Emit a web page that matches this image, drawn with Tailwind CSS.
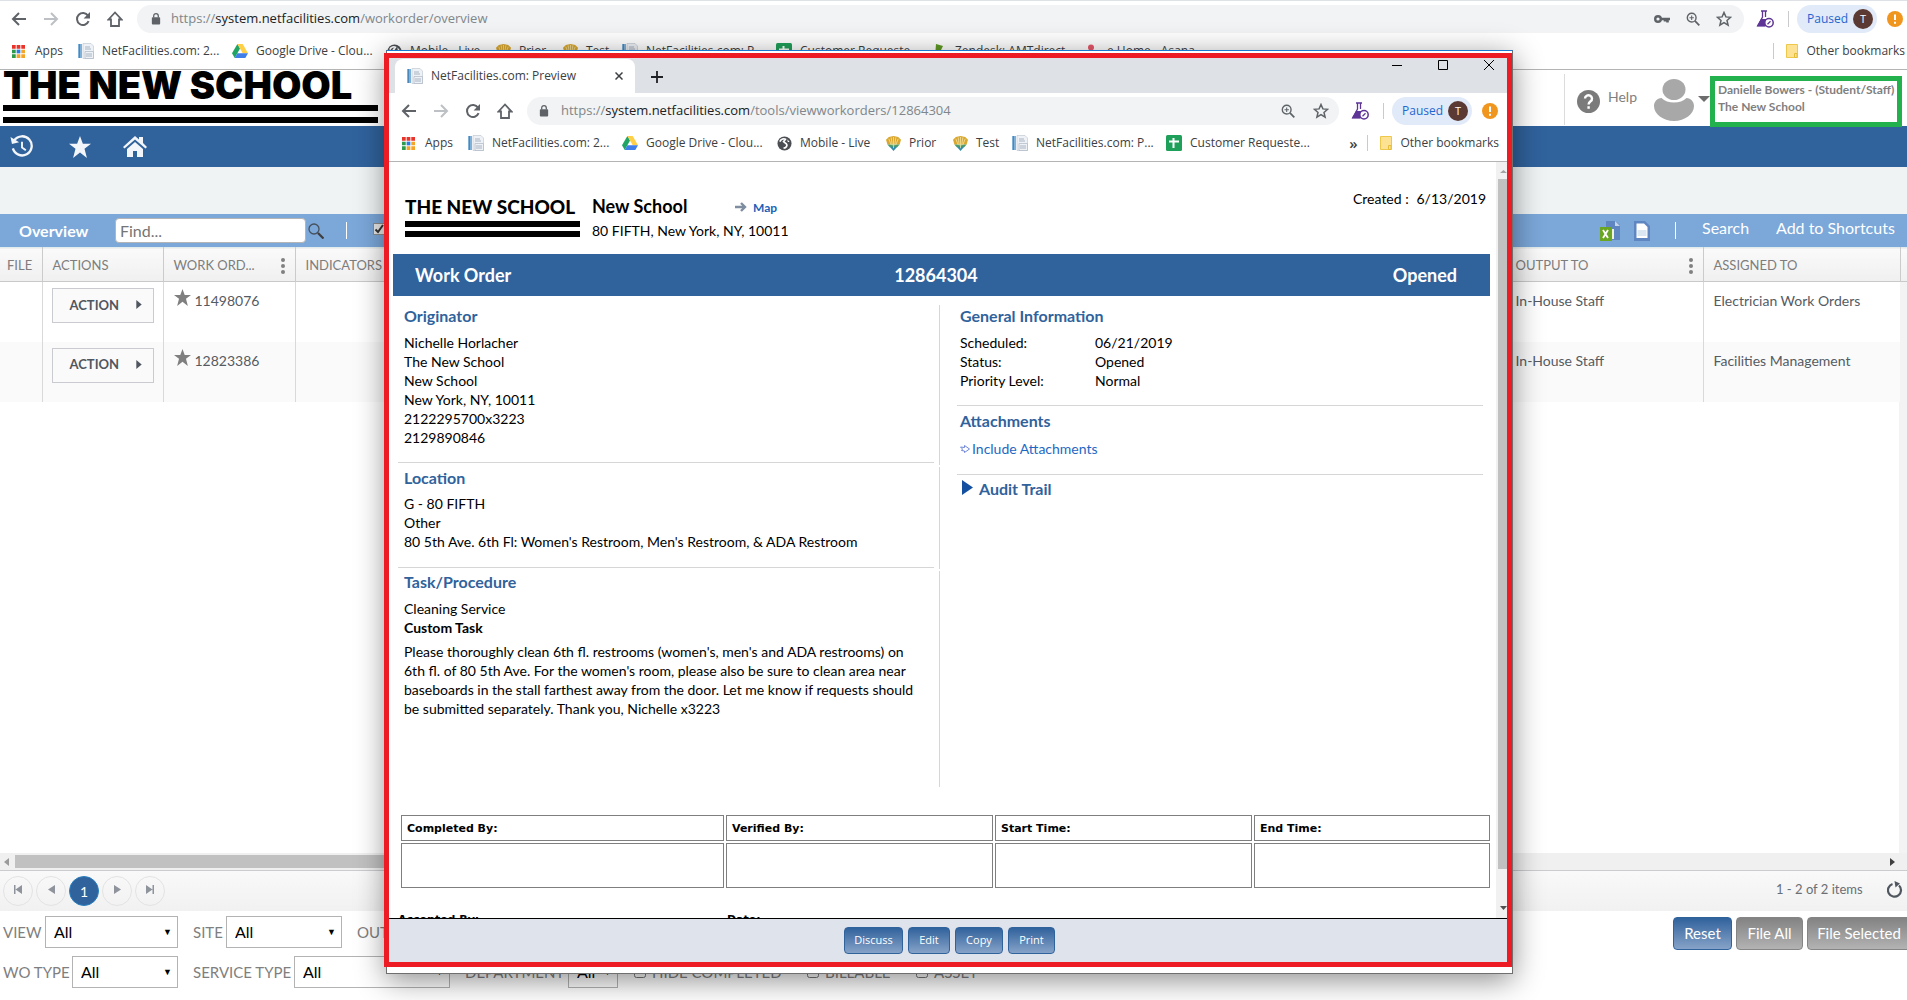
<!DOCTYPE html>
<html lang="en">
<head>
<meta charset="utf-8">
<title>NetFacilities.com: Work Order Overview</title>
<script src="https://cdn.jsdelivr.net/npm/@tailwindcss/browser@4"></script>
</head>
<body class="relative flex min-h-screen flex-col overflow-hidden bg-white font-['Lato',sans-serif] text-[14px] text-[#555b63]">

<!-- shared icon sprites -->
<svg class="hidden" aria-hidden="true">
  <symbol id="back" viewBox="0 0 16 16"><path d="M15 8H2M8 2L2 8l6 6" fill="none" stroke="currentColor" stroke-width="2"/></symbol>
  <symbol id="fwd" viewBox="0 0 16 16"><path d="M1 8h13M8 2l6 6-6 6" fill="none" stroke="currentColor" stroke-width="2"/></symbol>
  <symbol id="reload" viewBox="0 0 16 16"><path d="M13.600 10.200A6 6 0 1 1 13 4.600" fill="none" stroke="currentColor" stroke-width="2"/><path d="M15 1v6.400H8.600z" fill="currentColor"/></symbol>
  <symbol id="home" viewBox="0 0 16 16"><path d="M1.500 8.500L8 1.500l6.500 7H12V15H4V8.500z" fill="none" stroke="currentColor" stroke-width="1.800"/></symbol>
  <symbol id="lock" viewBox="0 0 10 13"><rect x="0.500" y="4.500" width="9" height="8" rx="1" fill="currentColor"/><path d="M2.500 5V3.200a2.500 2.500 0 0 1 5 0V5" fill="none" stroke="currentColor" stroke-width="1.400"/></symbol>
  <symbol id="apps" viewBox="0 0 14 14"><g fill="#e8352c"><path d="M0 0h4v4H0zM5 0h4v4H5zM10 0h4v4h-4z"/></g><path d="M0 5h4v4H0zM0 10h4v4H0z" fill="#2d9a4c"/><path d="M5 5h4v4H5z" fill="#2c7be5"/><path d="M10 5h4v4h-4zM5 10h4v4H5zM10 10h4v4h-4z" fill="#f3a52a"/></symbol>
  <symbol id="net" viewBox="0 0 16 16"><path d="M0 1h4v14H0z" fill="#7fb0d8"/><path d="M1 1h1v14H1z" fill="#4a87bb"/><path d="M5 .5h8l2.500 2.500V15.500H5z" fill="#eef1f5" stroke="#c3cad3" stroke-width=".7"/><path d="M7 4h5M7 6h6M8 11h6M8 13h6" stroke="#a9b4c2"/><path d="M7 8.500h8.500v7H7z" fill="none" stroke="#b5bfca" stroke-width=".8"/></symbol>
  <symbol id="drive" viewBox="0 0 16 14"><path d="M5.400 0L0 9.300 2.700 14 8 4.600z" fill="#1fa463"/><path d="M5.400 0h5.300L16 9.300h-5.300z" fill="#ffcf48"/><path d="M2.700 14l2.700-4.700H16L13.300 14z" fill="#3f7ee8"/></symbol>
  <symbol id="globe" viewBox="0 0 16 16"><circle cx="8" cy="8" r="7.500" fill="#4b4f54"/><path d="M3 6c1.500-3 4.500-3.500 6-2.500L7 6l3 2.500c1.500 1.500 0 4-3 4.500" stroke="#fff" stroke-width="1.800" fill="none"/><path d="M11 3.500l2.500 3h-2z" fill="#fff"/></symbol>
  <symbol id="crest" viewBox="0 0 16 16"><path d="M0 4l3-3 5-1 5 1 3 3-1.500 5h-13z" fill="#d9a72f"/><path d="M1.500 9h13L12 12H4z" fill="#4e9b6a"/><path d="M4 11.500h8L8 16z" fill="#2f8cab"/><path d="M3 3l2.500 6.500M8 1v12M13 3l-2.500 6.500M5.500 1.500L6.700 10M10.500 1.500L9.300 10" stroke="#f6e6a5" stroke-width=".8"/></symbol>
  <symbol id="sheets" viewBox="0 0 16 16"><rect width="16" height="16" rx="1.500" fill="#1fa05a"/><path d="M3 6.500h10M7.500 3v10" stroke="#fff" stroke-width="2"/></symbol>
  <symbol id="zen" viewBox="0 0 16 16"><path d="M5 1l7 2-2 4 2 7H4z" fill="#5f9b22"/></symbol>
  <symbol id="pin" viewBox="0 0 16 16"><circle cx="8" cy="4.500" r="3" fill="#e8596b"/><circle cx="3.500" cy="12" r="3" fill="#e8596b"/><circle cx="12.500" cy="12" r="3" fill="#e8596b"/></symbol>
  <symbol id="folder" viewBox="0 0 12 14"><path d="M.5.5h11v13H.5z" fill="#fde293" stroke="#edc84a"/><path d="M8.500 9.500h2.500v4h-2.500z" fill="#fde293" stroke="#e6bd38"/></symbol>
  <symbol id="zoom" viewBox="0 0 16 16"><circle cx="6.500" cy="6.500" r="5" fill="none" stroke="currentColor" stroke-width="1.600"/><path d="M10.200 10.200l5 5" stroke="currentColor" stroke-width="2"/><path d="M4 6.500h5M6.500 4v5" stroke="currentColor" stroke-width="1.200"/></symbol>
  <symbol id="ostar" viewBox="0 0 16 16"><path d="M8 1.500l1.900 4.400 4.700.4-3.600 3.100 1.100 4.700L8 11.600l-4.100 2.500L5 9.400 1.400 6.300l4.700-.4z" fill="none" stroke="currentColor" stroke-width="1.500"/></symbol>
  <symbol id="star" viewBox="0 0 20 20"><path d="M10 0l2.600 7H20l-5.900 4.500L16.300 20 10 14.900 3.700 20l2.200-8.500L0 7h7.400z" fill="currentColor"/></symbol>
  <symbol id="key" viewBox="0 0 16 10"><circle cx="4" cy="5" r="2.800" fill="none" stroke="currentColor" stroke-width="2.400"/><path d="M7 5h9M13.500 5v3.500M11 5v2.500" stroke="currentColor" stroke-width="2.600"/></symbol>
  <symbol id="flask" viewBox="0 0 18 18"><path d="M5 1h6M6.500 1v6L2 15.500h8M9.500 1v6" fill="none" stroke="#5e3596" stroke-width="1.300"/><path d="M5 9h5L9 16.500H.5z" fill="#5e3596"/><circle cx="13" cy="12.800" r="4.200" fill="#fff" stroke="#5e3596" stroke-width="1.500"/><path d="M11.500 14.300l3-3" stroke="#5e3596" stroke-width="1.300"/></symbol>
  <symbol id="alert" viewBox="0 0 16 16"><circle cx="8" cy="8" r="8" fill="#f0961e"/><path d="M8 3.500v5.500M8 10.700v2" stroke="#fff" stroke-width="2"/></symbol>
  <symbol id="play" viewBox="0 0 8 10"><path d="M1 0l6 5-6 5z" fill="currentColor"/></symbol>
</svg>

<!-- browser toolbar -->
<header class="flex h-[70px] shrink-0 flex-col border-t border-b border-t-[#dee1e6] border-b-[#b4b4b4] font-['Open_Sans',sans-serif] text-[12px] text-[#3c4043]">
  <div class="flex h-9 items-center pl-[11px] pr-1 text-[#5f6368]">
    <button class="mr-4 size-4" aria-label="Back"><svg class="size-4"><use href="#back"/></svg></button>
    <button class="mr-4 size-4 text-[#bdc0c4]" aria-label="Forward"><svg class="size-4"><use href="#fwd"/></svg></button>
    <button class="mr-4 size-4" aria-label="Reload"><svg class="size-4"><use href="#reload"/></svg></button>
    <button class="mr-3.5 size-4" aria-label="Home"><svg class="size-4"><use href="#home"/></svg></button>
    <div class="flex h-7 flex-1 items-center rounded-full bg-[#f1f3f4] pl-3.5 pr-3">
      <svg class="mr-2.5 h-3 w-2.5"><use href="#lock"/></svg>
      <span class="flex-1 text-[13px] text-[#80868b]">https://<span class="text-[#202124]">system.netfacilities.com</span>/workorder/overview</span>
      <svg class="mr-4 h-2.5 w-4"><use href="#key"/></svg>
      <svg class="mr-4 size-3.5"><use href="#zoom"/></svg>
      <svg class="size-4"><use href="#ostar"/></svg>
    </div>
    <svg class="ml-3 mr-3.5 size-[18px]"><use href="#flask"/></svg>
    <span class="mr-2 h-4 w-px bg-[#c8cacd]"></span>
    <button class="mr-2.5 flex h-7 items-center gap-2 rounded-full bg-[#e1eaf8] pl-2.5 pr-1 text-[#1f66d0]"><span class="w-[38px] text-left">Paused</span><span class="flex size-5 items-center justify-center rounded-full bg-[#5a3a32] text-[11px] text-white">T</span></button>
    <svg class="size-4"><use href="#alert"/></svg>
  </div>
  <nav class="flex h-7 items-center pl-3 pr-0.5 whitespace-nowrap" aria-label="Bookmarks">
    <a href="#" class="flex w-[66px] items-center gap-2.5"><svg class="size-[13px]"><use href="#apps"/></svg>Apps</a>
    <a href="#" class="flex w-[154px] items-center gap-2"><svg class="size-4"><use href="#net"/></svg>NetFacilities.com: 2...</a>
    <a href="#" class="flex w-[155px] items-center gap-2"><svg class="h-3.5 w-4"><use href="#drive"/></svg>Google Drive - Clou...</a>
    <a href="#" class="flex w-[109px] items-center gap-2"><svg class="size-[15px]"><use href="#globe"/></svg>Mobile - Live</a>
    <a href="#" class="flex w-[67px] items-center gap-2"><svg class="size-[15px]"><use href="#crest"/></svg>Prior</a>
    <a href="#" class="flex w-[59px] items-center gap-2"><svg class="size-[15px]"><use href="#crest"/></svg>Test</a>
    <a href="#" class="flex w-[154px] items-center gap-2"><svg class="size-4"><use href="#net"/></svg>NetFacilities.com: P...</a>
    <a href="#" class="flex w-[155px] items-center gap-2"><svg class="size-4"><use href="#sheets"/></svg>Customer Requeste...</a>
    <a href="#" class="flex w-[152px] items-center gap-2"><svg class="size-4"><use href="#zen"/></svg>Zendesk: AMTdirect</a>
    <a href="#" class="flex flex-1 items-center gap-2"><svg class="size-4"><use href="#pin"/></svg>e Home - Asana</a>
    <span class="mr-3 h-4 w-px bg-[#c8cacd]"></span>
    <a href="#" class="flex items-center gap-2"><svg class="h-3.5 w-3"><use href="#folder"/></svg>Other bookmarks</a>
  </nav>
</header>

<!-- brand + account -->
<div class="flex h-14 shrink-0 justify-between">
  <div class="ml-[3px] w-[375px] whitespace-nowrap text-black">
    <div class="h-[33px] font-['Inter',sans-serif] text-[38px] leading-[31px] font-black">THE NEW SCHOOL</div>
    <div class="mt-0.5 h-1.5 bg-black"></div>
    <div class="mt-1.5 h-1.5 bg-black"></div>
  </div>
  <div class="flex items-start pr-[5px] pt-1.5">
    <div class="-mt-0.5 mr-3 h-[51px] w-px bg-[#dcdcdc]"></div>
    <svg class="mt-3.5 mr-2 size-[23px]" viewBox="0 0 23 23"><circle cx="11.500" cy="11.500" r="11.500" fill="#7b7b7b"/><path d="M8 8.500a3.500 3.300 0 1 1 5.600 2.700c-1.300 1-2 1.500-2 3.300M11.600 16.200v2.500" fill="none" stroke="#fff" stroke-width="2.400"/></svg>
    <a href="#" class="mt-[11px] w-[46px] text-[14px] leading-5 text-[#808080]">Help</a>
    <svg class="mt-[3px] mr-1 h-[42px] w-10" viewBox="0 0 40 42"><ellipse cx="20" cy="10.500" rx="11.500" ry="10.500" fill="#a8a8a8"/><path d="M0 27c0-4 3-8 7.500-8 3 3 7.500 4.500 12.500 4.500s9.500-1.500 12.500-4.500C37 19 40 23 40 27c0 8-9 15-20 15S0 35 0 27z" fill="#a8a8a8"/></svg>
    <svg class="mt-5 h-1.5 w-3" viewBox="0 0 12 6"><path d="M0 0h12L6 6z" fill="#6d6d6d"/></svg>
    <div class="z-10 h-[51px] w-48 border-5 border-[#22b14c] pl-[3px] text-[12px] leading-[17px] font-bold whitespace-nowrap text-[#7f7f7f]">Danielle Bowers - (Student/Staff)<br>The New School</div>
  </div>
</div>

<nav class="flex h-[41px] shrink-0 items-center bg-[#30629c] pl-2.5 text-[#f2f5f9]" aria-label="Main">
  <a href="#" aria-label="History" class="mr-[35px]"><svg class="h-[23px] w-6" viewBox="0 0 24 24"><path d="M4 5.500A10 10 0 1 1 2.500 14" fill="none" stroke="currentColor" stroke-width="2.400"/><path d="M0 2l1.500 7.500L9 7.500z" fill="currentColor"/><path d="M12 7v6l4 3" fill="none" stroke="currentColor" stroke-width="2"/></svg></a>
  <a href="#" aria-label="Favorites" class="mr-8"><svg class="size-[22px]"><use href="#star"/></svg></a>
  <a href="#" aria-label="Home"><svg class="h-[21px] w-6" viewBox="0 0 24 21"><path d="M0 11L12 0l4 3.500V1h4v6l4 4-1.500 1.500L12 3.500 1.500 12.500z" fill="currentColor"/><path d="M12 6l8 7v8h-6v-6h-4v6H4v-8z" fill="currentColor"/></svg></a>
</nav>
<div class="h-[47px] shrink-0 bg-[#eff3f4]"></div>

<!-- overview bar -->
<div class="flex h-[33px] shrink-0 items-center bg-[#7ba7d9] pl-[19px] pr-3 text-[16px] text-white">
  <h1 class="w-24 font-bold">Overview</h1>
  <input type="text" aria-label="Find" placeholder="Find..." class="h-[25px] w-[191px] rounded border border-[#b5b5b5] bg-white px-1 text-[16px] placeholder:text-[#757575]">
  <svg class="mr-[22px] ml-0.5 size-4" viewBox="0 0 16 16"><circle cx="6" cy="6" r="5" fill="none" stroke="#47515d" stroke-width="1.300"/><path d="M10 10l5.500 5.500" stroke="#3e3e3e" stroke-width="2.200"/></svg>
  <span class="mr-[26px] h-[17px] w-px bg-white"></span>
  <span class="relative mb-1 flex size-3"><input type="checkbox" checked aria-label="Show all" class="size-3 appearance-none border border-[#8c8c8c] bg-[#e8e8e8]"><svg class="pointer-events-none absolute inset-0 size-3" viewBox="0 0 12 12"><path d="M2.500 6.500L5 9l5-7" fill="none" stroke="#333" stroke-width="2"/></svg></span>
  <div class="ml-auto flex items-center">
    <svg class="mr-3 h-5 w-[22px]" viewBox="0 0 22 20"><path d="M6 0h9l5 4v15H6z" fill="#5f86c0"/><path d="M15 0l5 5h-5z" fill="#c3d4ec"/><path d="M0 6h12v14H0z" fill="#6aa524"/><path d="M3 9l5 8M8 9l-5 8" stroke="#fff" stroke-width="1.800"/><path d="M12 8h2v10h-2z" fill="#eef3d9"/></svg>
    <svg class="mr-[25px] h-5 w-4" viewBox="0 0 16 20"><path d="M0 0h11l5 5v15H0z" fill="#5f86c0"/><path d="M2.500 2.500H10l3.500 3.500v11h-11z" fill="#fff"/><path d="M3.500 9h9v6h-9z" fill="#dbe6f3"/></svg>
    <span class="mr-[26px] h-[17px] w-px bg-white"></span>
    <a href="#" class="mb-1.5 w-[74px]">Search</a>
    <a href="#" class="mb-1.5 w-[119px] whitespace-nowrap">Add to Shortcuts</a>
  </div>
</div>

<!-- work order grid -->
<div class="flex min-h-0 flex-1 flex-col">
  <table class="w-full table-fixed border-collapse text-left">
    <colgroup><col class="w-[42px]"><col class="w-[121px]"><col class="w-[132px]"><col><col class="w-[198px]"><col class="w-[197px]"><col class="w-[7px]"></colgroup>
    <thead>
      <tr class="h-[34px] border-t border-b border-t-[#e3ecec] border-b-[#c9c9c9] bg-linear-to-b from-[#fafafa] to-[#f0f0f0] text-[13px] text-[#7d7d7d]">
        <th class="border-r border-[#cbcbcb] pt-[3px] pl-[7px] font-normal">FILE</th>
        <th class="border-r border-[#cbcbcb] pt-[3px] pl-2.5 font-normal">ACTIONS</th>
        <th class="border-r border-[#cbcbcb] pt-[3px] pl-2.5 font-normal"><div class="flex items-center justify-between pr-2.5"><span>WORK ORD...</span><svg class="h-4 w-1" viewBox="0 0 4 16"><g fill="#808080"><circle cx="2" cy="2" r="2"/><circle cx="2" cy="8" r="2"/><circle cx="2" cy="14" r="2"/></g></svg></div></th>
        <th class="border-r border-[#cbcbcb] pt-[3px] pl-2.5 font-normal">INDICATORS</th>
        <th class="border-r border-[#cbcbcb] pt-[3px] pl-2.5 font-normal"><div class="flex items-center justify-between pr-2.5"><span>OUTPUT TO</span><svg class="h-4 w-1" viewBox="0 0 4 16"><g fill="#808080"><circle cx="2" cy="2" r="2"/><circle cx="2" cy="8" r="2"/><circle cx="2" cy="14" r="2"/></g></svg></div></th>
        <th class="border-r border-[#cbcbcb] pt-[3px] pl-2.5 font-normal">ASSIGNED TO</th>
        <th></th>
      </tr>
    </thead>
    <tbody class="align-top">
      <tr class="h-[60px]">
        <td class="border-r border-[#d9d9d9]"></td>
        <td class="border-r border-[#d9d9d9] pt-1.5 pl-[9px]"><button class="flex h-[35px] w-[102px] items-center justify-between border border-[#c9cbd0] bg-[#fafafa] pr-2.5 pl-[17px] text-[13px] font-bold text-[#50565f]">ACTION<svg class="mb-0.5 h-[9px] w-2"><use href="#play"/></svg></button></td>
        <td class="border-r border-[#d9d9d9] pt-[7px] pl-2.5"><div class="flex"><svg class="mr-1 size-[17px] text-[#7f7f7f]"><use href="#star"/></svg><a href="#" class="pt-[3px] leading-[18px]">11498076</a></div></td>
        <td class="border-r border-[#d9d9d9]"></td>
        <td class="border-r border-[#d9d9d9] pt-2.5 pl-2.5 leading-[18px]">In-House Staff</td>
        <td class="pt-2.5 pl-2.5 leading-[18px]">Electrician Work Orders</td>
        <td class="bg-[#f3f3f3]"></td>
      </tr>
      <tr class="h-[60px] bg-[#fafafa]">
        <td class="border-r border-[#d9d9d9]"></td>
        <td class="border-r border-[#d9d9d9] pt-1.5 pl-[9px]"><button class="flex h-[35px] w-[102px] items-center justify-between border border-[#c9cbd0] bg-[#fafafa] pr-2.5 pl-[17px] text-[13px] font-bold text-[#50565f]">ACTION<svg class="mb-0.5 h-[9px] w-2"><use href="#play"/></svg></button></td>
        <td class="border-r border-[#d9d9d9] pt-[7px] pl-2.5"><div class="flex"><svg class="mr-1 size-[17px] text-[#7f7f7f]"><use href="#star"/></svg><a href="#" class="pt-[3px] leading-[18px]">12823386</a></div></td>
        <td class="border-r border-[#d9d9d9]"></td>
        <td class="border-r border-[#d9d9d9] pt-2.5 pl-2.5 leading-[18px]">In-House Staff</td>
        <td class="pt-2.5 pl-2.5 leading-[18px]">Facilities Management</td>
        <td class="bg-[#f3f3f3]"></td>
      </tr>
    </tbody>
  </table>
  <div class="flex flex-1 justify-end"><div class="w-2 bg-[#f3f3f3]"></div></div>
  <div class="flex h-[18px] shrink-0 items-center border-b border-[#cbcbd0] bg-[#f0f0f0] pl-1">
    <svg class="mr-1.5 h-2 w-[5px]" viewBox="0 0 5 8"><path d="M5 0v8L0 4z" fill="#9b9b9b"/></svg>
    <div class="mr-[398px] h-[13px] flex-1 bg-[#c1c1c1]"></div>
    <svg class="mr-3 h-2 w-[5px]" viewBox="0 0 5 8"><path d="M0 0v8l5-4z" fill="#404040"/></svg>
  </div>
</div>

<!-- pager -->
<div class="flex h-10 shrink-0 items-center gap-[3px] bg-linear-to-b from-[#f9f9f9] to-[#f1f1f1] pl-[3px] pr-1 text-[#8e939c]">
  <button aria-label="First page" class="flex size-[30px] items-center justify-center rounded-full border border-[#e3e3e3]"><svg class="mb-1 h-[9px] w-2" viewBox="0 0 8 9"><path d="M0 0h1.500v9H0zM8 0v9L1.500 4.500z" fill="currentColor"/></svg></button>
  <button aria-label="Previous page" class="flex size-[30px] items-center justify-center rounded-full border border-[#e3e3e3]"><svg class="mb-1 h-[9px] w-[7px]" viewBox="0 0 7 9"><path d="M7 0v9L0 4.500z" fill="currentColor"/></svg></button>
  <button class="flex size-[30px] items-center justify-center rounded-full border border-[#2a80c0] bg-[#30629c] text-white">1</button>
  <button aria-label="Next page" class="flex size-[30px] items-center justify-center rounded-full border border-[#e3e3e3]"><svg class="mb-1 h-[9px] w-[7px]" viewBox="0 0 7 9"><path d="M0 0v9l7-4.500z" fill="currentColor"/></svg></button>
  <button aria-label="Last page" class="flex size-[30px] items-center justify-center rounded-full border border-[#e3e3e3]"><svg class="mb-1 h-[9px] w-2" viewBox="0 0 8 9"><path d="M6.500 0H8v9H6.500zM0 0v9l6.500-4.500z" fill="currentColor"/></svg></button>
  <span class="mb-0.5 ml-auto w-[108px] text-[13px] text-[#6a6e75]">1 - 2 of 2 items</span>
  <button aria-label="Refresh" class="text-[#50565f]"><svg class="mb-1 h-[17px] w-4" viewBox="0 0 16 17"><path d="M5.500 3A6.500 6.500 0 1 0 12 4.500" fill="none" stroke="currentColor" stroke-width="2.200"/><path d="M7.500 0L13 2.500 8.500 6.500z" fill="currentColor"/></svg></button>
</div>

<!-- filters -->
<form class="flex h-[89px] shrink-0 justify-between overflow-hidden text-[15px] whitespace-nowrap text-[#7f7f7f]">
  <div class="flex flex-col gap-2 pt-[5px] pl-[3px]">
    <div class="flex h-8 items-center">
      <label for="f-view" class="w-[42px]">VIEW</label>
      <div class="relative mr-[15px]"><select id="f-view" class="h-8 w-[133px] appearance-none border border-[#b3b3b3] bg-white pl-2 text-[16px] text-black"><option>All</option></select><span class="pointer-events-none absolute top-[11px] right-1.5 text-[9px] leading-[9px] text-black">▼</span></div>
      <label for="f-site" class="w-[33px]">SITE</label>
      <div class="relative mr-[15px]"><select id="f-site" class="h-8 w-[116px] appearance-none border border-[#b3b3b3] bg-white pl-2 text-[16px] text-black"><option>All</option></select><span class="pointer-events-none absolute top-[11px] right-1.5 text-[9px] leading-[9px] text-black">▼</span></div>
      <label for="f-out" class="mr-2">OUTPUT TO</label>
      <select id="f-out" class="h-8 w-[116px] appearance-none border border-[#b3b3b3] bg-white pl-2 text-[16px] text-black"><option>All</option></select>
    </div>
    <div class="flex h-8 items-center">
      <label for="f-type" class="w-[69px]">WO TYPE</label>
      <div class="relative mr-[15px]"><select id="f-type" class="h-8 w-[106px] appearance-none border border-[#b3b3b3] bg-white pl-2 text-[16px] text-black"><option>All</option></select><span class="pointer-events-none absolute top-[11px] right-1.5 text-[9px] leading-[9px] text-black">▼</span></div>
      <label for="f-service" class="w-[101px]">SERVICE TYPE</label>
      <div class="relative mr-[15px]"><select id="f-service" class="h-8 w-[156px] appearance-none border border-[#b3b3b3] bg-white pl-2 text-[16px] text-black"><option>All</option></select><span class="pointer-events-none absolute top-[11px] right-1.5 text-[9px] leading-[9px] text-black">▼</span></div>
      <label for="f-dept" class="w-[103px]">DEPARTMENT</label>
      <div class="relative mr-4"><select id="f-dept" class="h-8 w-[50px] appearance-none border border-[#b3b3b3] bg-white pl-2 text-[16px] text-black"><option>All</option></select><span class="pointer-events-none absolute top-[11px] right-1.5 text-[9px] leading-[9px] text-black">▼</span></div>
      <label class="flex w-[173px] items-center gap-1.5"><input type="checkbox" class="size-3">HIDE COMPLETED</label>
      <label class="flex w-[109px] items-center gap-1.5"><input type="checkbox" class="size-3">BILLABLE</label>
      <label class="flex items-center gap-1.5"><input type="checkbox" class="size-3">ASSET</label>
    </div>
  </div>
  <div class="-mr-2 flex gap-1 pt-1.5 text-[15px] text-white">
    <button type="reset" class="h-[33px] w-[59px] rounded border border-[#30629c] bg-linear-to-b from-[#30629c] to-[#86a3c8]">Reset</button>
    <button type="button" class="h-[33px] w-[67px] rounded border border-[#858585] bg-linear-to-b from-[#838383] to-[#b3b3b3]">File All</button>
    <button type="button" class="h-[33px] w-[108px] rounded border border-[#858585] bg-linear-to-b from-[#838383] to-[#b3b3b3] pr-1">File Selected</button>
  </div>
</form>

<!-- preview window floating over the page -->
<section class="absolute top-[50px] left-[386px] z-20 h-[924px] w-[1127px] border border-[#6f6f6f] border-t-[#1a7ad0] bg-white shadow-[0_6px_28px_rgba(0,0,0,0.45)]" aria-label="NetFacilities.com: Preview">
  <div class="absolute top-[2px] -left-[3px] flex h-[914px] w-[1128px] flex-col overflow-hidden border-5 border-[#ed1c24] bg-white">
    <div class="flex h-[35px] shrink-0 justify-between bg-[#dee1e6] pl-1.5 font-['Open_Sans',sans-serif] text-[12px] text-[#3c4043]">
      <div class="flex items-end">
        <div class="flex h-[34px] w-60 items-center rounded-t-lg bg-white pr-3 pl-3"><svg class="mr-2 size-4"><use href="#net"/></svg><span class="flex-1">NetFacilities.com: Preview</span><button aria-label="Close tab"><svg class="size-2" viewBox="0 0 8 8"><path d="M.5.5l7 7M7.500.5l-7 7" stroke="#3c4043" stroke-width="1.500"/></svg></button></div>
        <button aria-label="New tab" class="mb-2.5 ml-4"><svg class="size-3" viewBox="0 0 12 12"><path d="M6 0v12M0 6h12" stroke="#202124" stroke-width="1.800"/></svg></button>
      </div>
      <div class="flex gap-9 pt-0.5 pr-[13px] text-black">
        <button aria-label="Minimize" class="h-2.5"><svg class="size-2.5" viewBox="0 0 10 10"><path d="M0 5.500h10" stroke="currentColor"/></svg></button>
        <button aria-label="Maximize" class="h-2.5"><svg class="size-2.5" viewBox="0 0 10 10"><path d="M.5.5h9v9h-9z" fill="none" stroke="currentColor"/></svg></button>
        <button aria-label="Close" class="h-2.5"><svg class="size-2.5" viewBox="0 0 10 10"><path d="M0 0l10 10M10 0L0 10" stroke="currentColor"/></svg></button>
      </div>
    </div>
    <div class="flex h-9 shrink-0 items-center pr-[9px] pl-3 font-['Open_Sans',sans-serif] text-[12px] text-[#5f6368]">
      <button class="mr-4 size-4" aria-label="Back"><svg class="size-4"><use href="#back"/></svg></button>
      <button class="mr-4 size-4 text-[#bdc0c4]" aria-label="Forward"><svg class="size-4"><use href="#fwd"/></svg></button>
      <button class="mr-4 size-4" aria-label="Reload"><svg class="size-4"><use href="#reload"/></svg></button>
      <button class="mr-3.5 size-4" aria-label="Home"><svg class="size-4"><use href="#home"/></svg></button>
      <div class="flex h-7 flex-1 items-center rounded-full bg-[#f1f3f4] pl-3 pr-2.5">
        <svg class="mr-3 h-3 w-2.5"><use href="#lock"/></svg>
        <span class="flex-1 text-[13px] text-[#80868b]">https://<span class="text-[#202124]">system.netfacilities.com</span>/tools/viewworkorders/12864304</span>
        <svg class="mr-[18px] size-3.5"><use href="#zoom"/></svg>
        <svg class="size-4"><use href="#ostar"/></svg>
      </div>
      <svg class="ml-3 mr-3.5 size-[18px]"><use href="#flask"/></svg>
      <span class="mr-2 h-4 w-px bg-[#c8cacd]"></span>
      <button class="mr-2.5 flex h-7 items-center gap-2 rounded-full bg-[#e1eaf8] pl-2.5 pr-1 text-[#1f66d0]"><span class="w-[38px] text-left">Paused</span><span class="flex size-5 items-center justify-center rounded-full bg-[#5a3a32] text-[11px] text-white">T</span></button>
      <svg class="size-4"><use href="#alert"/></svg>
    </div>
    <nav class="flex h-[33px] shrink-0 items-start border-b border-[#b4b4b4] pt-1 pr-2 pl-[13px] font-['Open_Sans',sans-serif] text-[12px] whitespace-nowrap text-[#3c4043]" aria-label="Preview bookmarks">
      <div class="flex h-5 flex-1 items-center">
        <a href="#" class="flex w-[66px] items-center gap-2.5"><svg class="size-[13px]"><use href="#apps"/></svg>Apps</a>
        <a href="#" class="flex w-[154px] items-center gap-2"><svg class="size-4"><use href="#net"/></svg>NetFacilities.com: 2...</a>
        <a href="#" class="flex w-[155px] items-center gap-2"><svg class="h-3.5 w-4"><use href="#drive"/></svg>Google Drive - Clou...</a>
        <a href="#" class="flex w-[109px] items-center gap-2"><svg class="size-[15px]"><use href="#globe"/></svg>Mobile - Live</a>
        <a href="#" class="flex w-[67px] items-center gap-2"><svg class="size-[15px]"><use href="#crest"/></svg>Prior</a>
        <a href="#" class="flex w-[59px] items-center gap-2"><svg class="size-[15px]"><use href="#crest"/></svg>Test</a>
        <a href="#" class="flex w-[154px] items-center gap-2"><svg class="size-4"><use href="#net"/></svg>NetFacilities.com: P...</a>
        <a href="#" class="flex flex-1 items-center gap-2"><svg class="size-4"><use href="#sheets"/></svg>Customer Requeste...</a>
        <span class="mr-2.5 text-[15px] font-semibold">»</span>
        <span class="mr-3 h-4 w-px bg-[#c8cacd]"></span>
        <a href="#" class="flex items-center gap-2"><svg class="h-3.5 w-3"><use href="#folder"/></svg>Other bookmarks</a>
      </div>
    </nav>

    <div class="flex min-h-0 flex-1 overflow-hidden text-[14px] leading-[19px] text-black">
      <div class="min-w-0 flex-1">
        <div class="flex h-[92px] pt-[34px] pr-2.5 pl-4">
          <div class="w-[175px] whitespace-nowrap">
            <div class="h-[25px] text-[19px] leading-[21px] font-black">THE NEW SCHOOL</div>
            <div class="h-1.5 bg-black"></div>
            <div class="mt-1 h-1.5 bg-black"></div>
          </div>
          <div class="ml-3">
            <div class="flex items-center"><h2 class="w-[143px] text-[18px] font-bold">New School</h2><svg class="mr-1.5 h-2.5 w-3" viewBox="0 0 12 10"><path d="M0 5h9M6 1l4 4-4 4" fill="none" stroke="#7e8ea0" stroke-width="2.400"/></svg><a href="#" class="pt-0.5 text-[12px] font-bold text-[#1c5fb8]">Map</a></div>
            <p class="mt-1">80 FIFTH, New York, NY, 10011</p>
          </div>
          <p class="-mt-[7px] ml-auto flex w-[133px] justify-between"><span>Created :</span><span>6/13/2019</span></p>
        </div>
        <div class="mr-1.5 ml-1 grid h-[42px] grid-cols-3 items-center bg-[#30629c] pr-[33px] pl-[22px] text-[18px] font-bold text-white"><span>Work Order</span><span class="text-center">12864304</span><span class="text-right">Opened</span></div>
        <div class="flex justify-between pt-[9px] pr-[13px] pl-[9px]">
          <div class="w-[542px]">
            <section class="mb-0.5 h-40 border-r border-[#d6d6d6]"><div class="h-[158px] w-[536px] border-b border-[#d6d6d6] pl-1.5">
              <h3 class="mb-1.5 text-[16px] leading-[22px] font-bold text-[#30629c]">Originator</h3>
              <p>Nichelle Horlacher<br>The New School<br>New School<br>New York, NY, 10011<br>2122295700x3223<br>2129890846</p>
            </div></section>
            <section class="mb-0.5 h-[102px] border-r border-[#d6d6d6]"><div class="h-[101px] w-[536px] border-b border-[#d6d6d6] pl-1.5">
              <h3 class="mb-[5px] text-[16px] leading-[22px] font-bold text-[#30629c]">Location</h3>
              <p>G - 80 FIFTH<br>Other<br>80 5th Ave. 6th Fl: Women's Restroom, Men's Restroom, &amp; ADA Restroom</p>
            </div></section>
            <section class="h-[216px] border-r border-[#d6d6d6] pl-1.5">
              <h3 class="mb-1.5 text-[16px] leading-[22px] font-bold text-[#30629c]">Task/Procedure</h3>
              <p>Cleaning Service<br><b>Custom Task</b></p>
              <p class="mt-[5px] whitespace-nowrap">Please thoroughly clean 6th fl. restrooms (women's, men's and ADA restrooms) on<br>6th fl. of 80 5th Ave. For the women's room, please also be sure to clean area near<br>baseboards in the stall farthest away from the door. Let me know if requests should<br>be submitted separately. Thank you, Nichelle x3223</p>
            </section>
          </div>
          <div class="w-[526px]">
            <section class="h-[101px] border-b border-[#d6d6d6] pl-[3px]">
              <h3 class="mb-1.5 text-[16px] leading-[22px] font-bold text-[#30629c]">General Information</h3>
              <dl class="grid grid-cols-[135px_1fr]"><dt>Scheduled:</dt><dd>06/21/2019</dd><dt>Status:</dt><dd>Opened</dd><dt>Priority Level:</dt><dd>Normal</dd></dl>
            </section>
            <section class="h-[69px] border-b border-[#d6d6d6] pt-1 pl-[3px]">
              <h3 class="mb-[7px] text-[16px] leading-[22px] font-bold text-[#30629c]">Attachments</h3>
              <a href="#" class="flex items-center gap-0.5 text-[#1d68c4]"><svg class="size-2.5" viewBox="0 0 10 10"><path d="M.5 3l4 .5v-2L9.500 5 4.500 8.500v-1.500l-3-.5L2.500 5z" fill="#fff" stroke="#6f86d6"/></svg>Include Attachments</a>
            </section>
            <section class="flex items-center gap-1.5 pt-[3px] pl-[5px]"><svg class="mb-1 h-[15px] w-[11px]" viewBox="0 0 11 15"><path d="M0 0l11 7.500L0 15z" fill="#1450a0"/></svg><h3 class="text-[16px] leading-[22px] font-bold text-[#30629c]">Audit Trail</h3></section>
          </div>
        </div>
        <table class="mt-[26px] ml-2.5 w-[1093px] table-fixed border-separate border-spacing-0.5 text-left font-['DejaVu_Sans',sans-serif] text-[11px]">
          <colgroup><col class="w-[323px]"><col class="w-[267px]"><col class="w-[257px]"><col></colgroup>
          <tr class="h-[26px]"><th class="border border-[#7f7f7f] pl-[5px]">Completed By:</th><th class="border border-[#7f7f7f] pl-[5px]">Verified By:</th><th class="border border-[#7f7f7f] pl-[5px]">Start Time:</th><th class="border border-[#7f7f7f] pl-[5px]">End Time:</th></tr>
          <tr class="h-[45px]"><td class="border border-[#7f7f7f]"></td><td class="border border-[#7f7f7f]"></td><td class="border border-[#7f7f7f]"></td><td class="border border-[#7f7f7f]"></td></tr>
        </table>
        <div class="mt-5 ml-[9px] flex font-['DejaVu_Sans',sans-serif] text-[11px] font-bold"><span class="w-[329px]">Accepted By:</span><span>Date:</span></div>
      </div>
      <div class="flex w-[11px] flex-col items-end bg-[#f1f1f1]">
        <svg class="mt-2 mr-0 mb-1.5 h-[3px] w-[7px]" viewBox="0 0 7 3"><path d="M0 3h7L3.500 0z" fill="#a3a3a3"/></svg>
        <div class="h-[690px] w-[9px] shrink-0 bg-[#c1c1c1]"></div>
        <svg class="mt-auto mb-2 h-1 w-[7px]" viewBox="0 0 7 4"><path d="M0 0h7L3.500 4z" fill="#505050"/></svg>
      </div>
    </div>
    <footer class="flex h-[44px] shrink-0 items-start justify-center gap-[5px] border-t border-black bg-[#dfe3eb] pt-2 pl-[3px] font-['Open_Sans',sans-serif] text-[11px] text-white">
      <button class="h-[27px] w-[59px] rounded border border-[#30629c] bg-linear-to-b from-[#30629c] to-[#86a3c8]">Discuss</button>
      <button class="h-[27px] w-[42px] rounded border border-[#30629c] bg-linear-to-b from-[#30629c] to-[#86a3c8]">Edit</button>
      <button class="h-[27px] w-12 rounded border border-[#30629c] bg-linear-to-b from-[#30629c] to-[#86a3c8]">Copy</button>
      <button class="h-[27px] w-[47px] rounded border border-[#30629c] bg-linear-to-b from-[#30629c] to-[#86a3c8]">Print</button>
    </footer>
  </div>
</section>
</body>
</html>
